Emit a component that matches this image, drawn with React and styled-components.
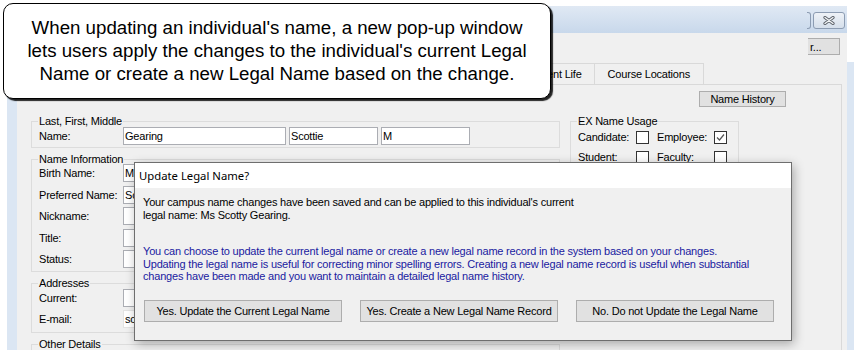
import React from "react";
import styled, { createGlobalStyle } from "styled-components";

const GlobalStyle = createGlobalStyle`
  html, body {
    margin: 0;
    padding: 0;
    background: #fff;
  }
  * {
    box-sizing: border-box;
  }
`;

const Root = styled.div`
  position: relative;
  width: 854px;
  height: 350px;
  overflow: hidden;
  display: flex;
  background: #fff;
  font-family: "Liberation Sans", Arial, sans-serif;
  font-size: 11px;
  letter-spacing: -0.2px;
  color: #000;
`;

const Window = styled.div`
  margin: 6px 0 0 7px;
  width: 840px;
  display: flex;
  flex-direction: column;
`;

const RightEdge = styled.div`
  flex: 1;
  margin-top: 62px;
  background: #dbe6f3;
`;

const TitleBar = styled.div`
  flex-shrink: 0;
  height: 27px;
  background: linear-gradient(#e0e9f4, #c8d8eb);
  display: flex;
  justify-content: flex-end;
  align-items: flex-start;
  padding: 6px 2px 0 0;
`;

const MaxEdge = styled.div`
  width: 4px;
  height: 17px;
  border: 1px solid #8c9cb2;
  border-left: none;
  border-radius: 0 3px 3px 0;
  margin-right: 2px;
`;

const CloseButton = styled.div`
  width: 32px;
  height: 17px;
  border: 1px solid #8c9cb2;
  border-radius: 3px;
  background: linear-gradient(#eef2f7, #d5dfeb);
  display: flex;
  align-items: center;
  justify-content: center;
`;

const WinBody = styled.div`
  flex: 1;
  min-height: 0;
  display: flex;
`;

const Frame = styled.div`
  width: 10px;
  background: #dbe6f3;
`;

const Client = styled.div`
  flex: 1;
  min-height: 0;
  overflow: hidden;
  background: #f0f0f0;
  display: flex;
  flex-direction: column;
`;

const TopBar = styled.div`
  flex-shrink: 0;
  height: 30px;
  display: flex;
  justify-content: flex-end;
  align-items: flex-start;
  padding: 5px 7px 0 0;
`;

const Button = styled.button`
  font-family: "Liberation Sans", Arial, sans-serif;
  font-size: 11px;
  letter-spacing: -0.2px;
  color: #000;
  background: #e1e1e1;
  border: 1px solid #adadad;
  border-radius: 0;
  padding: 0;
  margin: 0;
  flex-shrink: 0;
  height: ${(p) => p.$h || 17}px;
  width: ${(p) => p.$w}px;
  display: flex;
  align-items: center;
  justify-content: center;
  white-space: nowrap;
`;

const ClippedButton = styled(Button)`
  border-left: none;
  justify-content: flex-start;
  padding-left: 2px;
`;

const TabStrip = styled.div`
  flex-shrink: 0;
  width: 687px;
  height: 21px;
  display: flex;
  justify-content: flex-end;
  overflow: hidden;
`;

const Tab = styled.div`
  height: 21px;
  flex-shrink: 0;
  padding: 0 ${(p) => p.$pad}px;
  border: 1px solid #d9d9d9;
  border-bottom: none;
  margin-left: -1px;
  display: flex;
  align-items: center;
  font-size: 11px;
  background: #f0f0f0;
`;

const Panel = styled.div`
  flex: 1;
  margin-right: 5px;
  border-top: 1px solid #d9d9d9;
  border-right: 1px solid #d9d9d9;
`;

const HistoryRow = styled.div`
  display: flex;
  justify-content: flex-end;
  padding: 6px 55px 0 0;
`;

const MainRow = styled.div`
  display: flex;
  align-items: flex-start;
  gap: 10px;
  padding-left: 14px;
  margin-top: 8px;
`;

const LeftCol = styled.div`
  width: 529px;
  flex-shrink: 0;
  display: flex;
  flex-direction: column;
  gap: 5px;
`;

const Group = styled.fieldset`
  margin: 0;
  padding: 0 7px ${(p) => p.$pb ?? 3}px;
  border: 1px solid #dcdcdc;
  min-width: 0;
  width: ${(p) => (p.$w ? `${p.$w}px` : "auto")};
  flex-shrink: 0;
`;

const Legend = styled.legend`
  padding: 0 1px;
  font-size: 11px;
  line-height: 12px;
  margin-left: -1px;
`;

const Rows = styled.div`
  display: grid;
  row-gap: ${(p) => p.$gap}px;
  margin-top: ${(p) => p.$mt || 0}px;
`;

const Row = styled.div`
  height: 18px;
  display: flex;
  align-items: center;
`;

const Label = styled.div`
  width: 84px;
  flex-shrink: 0;
  font-size: 11px;
  white-space: nowrap;
`;

const TextBox = styled.div`
  width: ${(p) => p.$w}px;
  flex-shrink: 0;
  height: 18px;
  margin-right: ${(p) => p.$mr || 0}px;
  background: #fff;
  border: 1px solid ${(p) => (p.$soft ? "#e3e3e3" : "#abadb3")};
  font-size: 11px;
  padding: 0 1px;
  display: flex;
  align-items: center;
  white-space: nowrap;
  overflow: hidden;
`;

const CheckGrid = styled.div`
  display: grid;
  grid-template-columns: 58px 13px 8px 57px 13px;
  grid-auto-rows: 18px;
  row-gap: 2px;
  align-items: center;
  margin-top: 1px;
`;

const CheckLabel = styled.div`
  font-size: 11px;
  grid-column: ${(p) => p.$col};
`;

const Box = styled.div`
  width: 13px;
  height: 13px;
  background: #fff;
  border: 1px solid #333;
  grid-column: ${(p) => p.$col};
  display: flex;
  align-items: center;
  justify-content: center;
`;

const Callout = styled.div`
  position: absolute;
  left: 3px;
  top: 3px;
  width: 548px;
  height: 96px;
  background: #fff;
  border: 1.5px solid #000;
  border-radius: 10px;
  box-shadow: 2px 2px 1px rgba(0, 0, 0, 0.85);
  padding-top: 12px;
  text-align: center;
  font-family: "Liberation Sans", Arial, sans-serif;
  font-size: 18.7px;
  letter-spacing: 0;
  line-height: 23px;
  color: #000;
`;

const Dialog = styled.div`
  position: absolute;
  left: 134px;
  top: 162px;
  width: 658px;
  height: 179px;
  background: #f0f0f0;
  border: 1px solid #6e6e6e;
  box-shadow: 2px 3px 10px rgba(0, 0, 0, 0.3);
  display: flex;
  flex-direction: column;
`;

const DialogTitle = styled.div`
  flex-shrink: 0;
  height: 25px;
  background: #fff;
  padding-left: 4px;
  display: flex;
  align-items: center;
  font-family: "Noto Sans", "Open Sans", sans-serif;
  font-size: 11.3px;
  letter-spacing: 0;
  color: #000;
`;

const DialogBody = styled.div`
  padding: 8px 8px 0 8px;
`;

const Para = styled.p`
  margin: 0 0 ${(p) => p.$mb}px;
  font-size: 11px;
  line-height: ${(p) => p.$lh}px;
  color: ${(p) => p.$color || "#000"};
  white-space: nowrap;
`;

const ButtonRow = styled.div`
  display: flex;
  gap: 18px;
  padding-left: 1px;
`;

const CloseGlyph = () => (
  <svg width="12" height="9" viewBox="0 0 12 9">
    <path d="M2 1.5 L10 7.5 M10 1.5 L2 7.5" stroke="#5a6068" strokeWidth="3.2" strokeLinecap="round" />
    <path d="M2 1.5 L10 7.5 M10 1.5 L2 7.5" stroke="#f4f6f8" strokeWidth="1.3" strokeLinecap="round" />
  </svg>
);

const Check = () => (
  <svg width="11" height="11" viewBox="0 0 11 11">
    <polyline points="2,5.5 4.5,8 9,2.5" fill="none" stroke="#555" strokeWidth="1.2" />
  </svg>
);

const nameInfo = [
  ["Birth Name:", "Marsha"],
  ["Preferred Name:", "Scotty"],
  ["Nickname:", ""],
  ["Title:", ""],
  ["Status:", ""],
];

const addresses = [
  ["Current:", "", false],
  ["E-mail:", "scotty.gearing@campus.edu", true],
];

const tabs = [
  ["Student Life", 12],
  ["Course Locations", 13],
];

export default function App() {
  return (
    <Root>
      <GlobalStyle />
      <Window>
        <TitleBar>
          <MaxEdge />
          <CloseButton>
            <CloseGlyph />
          </CloseButton>
        </TitleBar>
        <WinBody>
          <Frame />
          <Client>
            <TopBar>
              <ClippedButton $w={32}>r...</ClippedButton>
            </TopBar>
            <TabStrip>
              {tabs.map(([t, pad]) => (
                <Tab key={t} $pad={pad}>
                  {t}
                </Tab>
              ))}
            </TabStrip>
            <Panel>
              <HistoryRow>
                <Button $w={87} $h={16}>
                  Name History
                </Button>
              </HistoryRow>
              <MainRow>
                <LeftCol>
                  <Group $pb={2}>
                    <Legend>Last, First, Middle</Legend>
                    <Row>
                      <Label>Name:</Label>
                      <TextBox $w={163} $mr={3}>Gearing</TextBox>
                      <TextBox $w={89} $mr={3}>Scottie</TextBox>
                      <TextBox $w={89}>M</TextBox>
                    </Row>
                  </Group>
                  <Group $pb={3}>
                    <Legend>Name Information</Legend>
                    <Rows $gap={3.5} $mt={-1}>
                      {nameInfo.map(([l, v]) => (
                        <Row key={l}>
                          <Label>{l}</Label>
                          <TextBox $w={163}>{v}</TextBox>
                        </Row>
                      ))}
                    </Rows>
                  </Group>
                  <Group $pb={4}>
                    <Legend>Addresses</Legend>
                    <Rows $gap={3}>
                      {addresses.map(([l, v, soft]) => (
                        <Row key={l}>
                          <Label>{l}</Label>
                          <TextBox $w={163} $soft={soft}>
                            {v}
                          </TextBox>
                        </Row>
                      ))}
                    </Rows>
                  </Group>
                  <Group $pb={30}>
                    <Legend>Other Details</Legend>
                  </Group>
                </LeftCol>
                <Group $w={169} $pb={6}>
                  <Legend>EX Name Usage</Legend>
                  <CheckGrid>
                    <CheckLabel $col={1}>Candidate:</CheckLabel>
                    <Box $col={2} />
                    <CheckLabel $col={4}>Employee:</CheckLabel>
                    <Box $col={5}>
                      <Check />
                    </Box>
                    <CheckLabel $col={1}>Student:</CheckLabel>
                    <Box $col={2} />
                    <CheckLabel $col={4}>Faculty:</CheckLabel>
                    <Box $col={5} />
                  </CheckGrid>
                </Group>
              </MainRow>
            </Panel>
          </Client>
        </WinBody>
      </Window>
      <RightEdge />

      <Callout>
        When updating an individual's name, a new pop-up window
        <br />
        lets users apply the changes to the individual's current Legal
        <br />
        Name or create a new Legal Name based on the change.
      </Callout>

      <Dialog>
        <DialogTitle>Update Legal Name?</DialogTitle>
        <DialogBody>
          <Para $lh={13} $mb={23}>
            Your campus name changes have been saved and can be applied to this individual's current
            <br />
            legal name: Ms Scotty Gearing.
          </Para>
          <Para $lh={12.5} $mb={17} $color="#1a1aa0">
            You can choose to update the current legal name or create a new legal name record in the system based on your changes.
            <br />
            Updating the legal name is useful for correcting minor spelling errors. Creating a new legal name record is useful when substantial
            <br />
            changes have been made and you want to maintain a detailed legal name history.
          </Para>
          <ButtonRow>
            <Button $w={198} $h={22}>
              Yes. Update the Current Legal Name
            </Button>
            <Button $w={198} $h={22}>
              Yes. Create a New Legal Name Record
            </Button>
            <Button $w={198} $h={22}>
              No. Do not Update the Legal Name
            </Button>
          </ButtonRow>
        </DialogBody>
      </Dialog>
    </Root>
  );
}
